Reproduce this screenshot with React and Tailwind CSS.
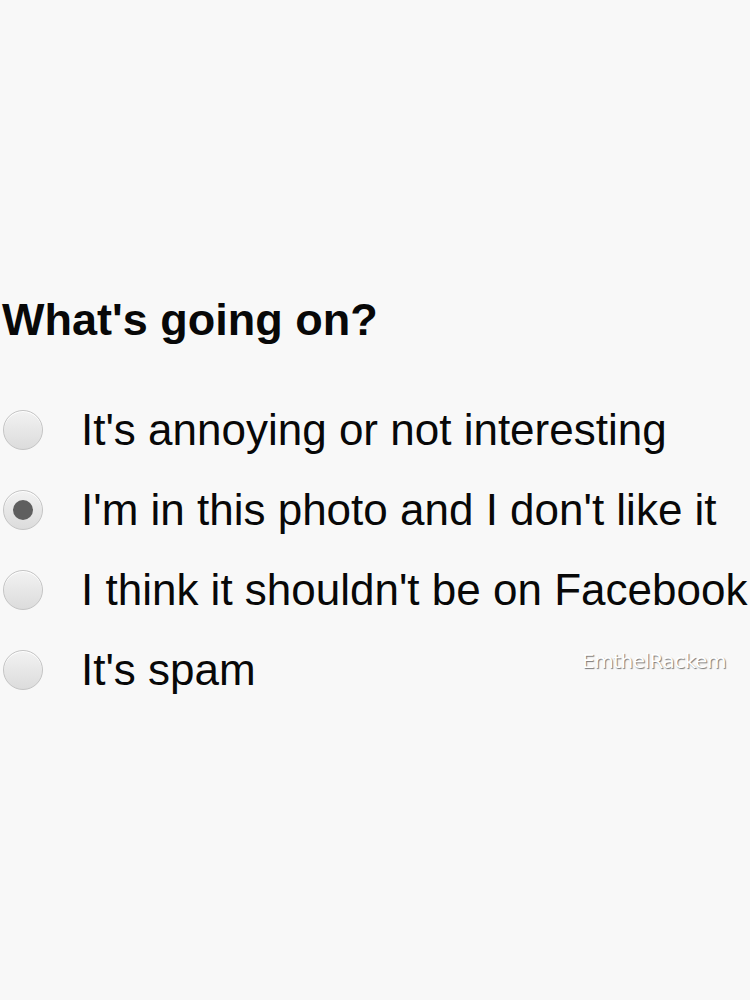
import React from "react";

const options = [
  { label: "It's annoying or not interesting", checked: false },
  { label: "I'm in this photo and I don't like it", checked: true },
  { label: "I think it shouldn't be on Facebook", checked: false },
  { label: "It's spam", checked: false },
];

const Radio = ({ checked }) => (
  <div className="w-[40px] h-[40px] shrink-0 rounded-full border border-[#c4c4c4] bg-gradient-to-b from-[#f2f2f2] to-[#dcdcdc] shadow-[inset_0_1px_0_#fff] flex items-center justify-center">
    {checked && <div className="w-[20px] h-[20px] rounded-full bg-[#5f5f5f]" />}
  </div>
);

export default function App() {
  return (
    <div className="relative w-[750px] h-[1000px] overflow-hidden bg-[#f8f8f8] font-['Liberation_Sans',Arial,sans-serif] text-[#080808]">
      <div className="flex flex-col pt-[297px]">
        <h1 className="pl-[2px] text-[45px] leading-[45px] font-bold">What's going on?</h1>
        <div className="mt-[48px] flex flex-col">
          {options.map((o) => (
            <div key={o.label} className="flex items-center h-[80px] pl-[3px] gap-[38px]">
              <Radio checked={o.checked} />
              <span className="text-[44px] leading-[80px] whitespace-nowrap">{o.label}</span>
            </div>
          ))}
        </div>
      </div>
      <div className="absolute left-[582px] top-[649px] text-[20px] leading-[24px] text-white font-['DejaVu_Sans',sans-serif] tracking-[-0.5px] [text-shadow:1px_1px_1px_#777]">
        EmthelRackem
      </div>
    </div>
  );
}
